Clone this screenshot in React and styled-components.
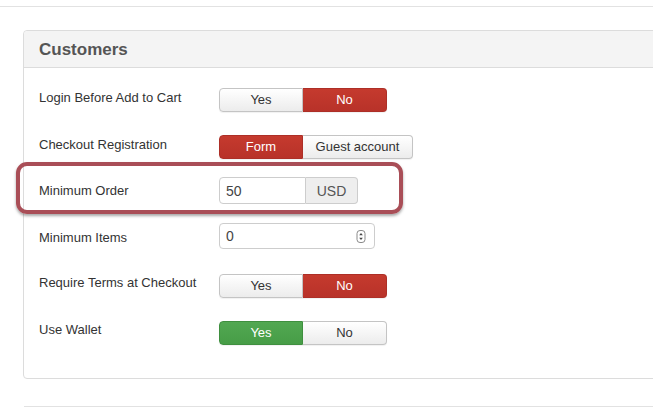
import React from "react";
import styled, { createGlobalStyle } from "styled-components";

const GlobalStyle = createGlobalStyle`
  html, body {
    margin: 0;
    padding: 0;
    background: #fff;
    overflow: hidden;
  }

  body {
    font-family: "Liberation Sans", Arial, sans-serif;
    color: #333;
  }
`;

const Page = styled.div`
  width: 653px;
  height: 408px;
  overflow: hidden;
  padding-top: 6px;
  box-sizing: border-box;
`;

const Rule = styled.hr`
  margin: ${(p) => p.$top || 0}px 0 0 ${(p) => p.$left || 0}px;
  width: 700px;
  height: 0;
  border: none;
  border-top: 1px solid #e2e2e2;
`;

const Panel = styled.section`
  margin: 23px 0 0 23px;
  width: 700px;
  border: 1px solid #dcdcdc;
  border-radius: 4px;
  background: #fff;
`;

const PanelHeader = styled.header`
  background: #f4f4f4;
  border-bottom: 1px solid #dcdcdc;
  border-radius: 4px 4px 0 0;
  padding: 9px 15px 7px;

  h2 {
    margin: 0;
    font-size: 17px;
    line-height: 20px;
    font-weight: bold;
    color: #555;
  }
`;

const PanelBody = styled.div`
  padding: 20px 15px 33px;
`;

const Row = styled.div`
  position: relative;
  display: flex;
  align-items: flex-start;
  margin-top: ${(p) => p.$space || 0}px;
`;

const Label = styled.label`
  width: 180px;
  flex: none;
  font-size: 13px;
  line-height: 18px;
  padding-top: ${(p) => p.$pad || 0}px;
  color: #333;
`;

const Toggle = styled.div`
  display: inline-flex;
  border-radius: 4px;
  box-shadow: 0 1px 1px rgba(0, 0, 0, 0.06);
`;

const tones = {
  danger: {
    bg: "linear-gradient(#c53a2e, #b83229)",
    border: "#ad2f27",
    color: "#fff",
  },
  success: {
    bg: "linear-gradient(#52a852, #479d47)",
    border: "#3f8f3f",
    color: "#fff",
  },
  plain: {
    bg: "linear-gradient(#ffffff, #ececec)",
    border: "#c4c4c4",
    color: "#333",
  },
};

const ToggleButton = styled.button`
  width: ${(p) => p.$width || 84}px;
  height: 24px;
  padding: 0;
  margin: 0;
  font-family: inherit;
  font-size: 13px;
  line-height: 22px;
  color: ${(p) => tones[p.$tone].color};
  background: ${(p) => tones[p.$tone].bg};
  border: 1px solid ${(p) => tones[p.$tone].border};
  border-left-width: 0;
  cursor: pointer;

  &:first-child {
    border-left-width: 1px;
    border-radius: 4px 0 0 4px;
  }

  &:last-child {
    border-radius: 0 4px 4px 0;
  }
`;

const InputGroup = styled.div`
  display: inline-flex;
  height: 27px;
`;

const TextInput = styled.input`
  box-sizing: border-box;
  width: ${(p) => p.$width}px;
  height: 100%;
  padding: 0 6px;
  margin: 0;
  font-family: inherit;
  font-size: 14px;
  color: #444;
  background: #fff;
  border: 1px solid #cdcdcd;
  border-radius: ${(p) => (p.$joined ? "4px 0 0 4px" : "4px")};
  outline: none;
`;

const AddOn = styled.span`
  box-sizing: border-box;
  width: 52px;
  height: 100%;
  display: flex;
  align-items: center;
  justify-content: center;
  font-size: 14px;
  color: #555;
  background: #eee;
  border: 1px solid #cdcdcd;
  border-left: none;
  border-radius: 0 4px 4px 0;
`;

const NumberField = styled.div`
  box-sizing: border-box;
  width: 156px;
  height: 26px;
  display: flex;
  align-items: center;
  padding: 0 8px 0 6px;
  border: 1px solid #cdcdcd;
  border-radius: 4px;
  background: #fff;

  input {
    flex: 1;
    min-width: 0;
    border: none;
    outline: none;
    padding: 0;
    font-family: inherit;
    font-size: 14px;
    color: #444;
    background: transparent;
  }
`;

const Highlight = styled.div`
  position: absolute;
  left: -23px;
  top: -15px;
  width: 387px;
  height: 52px;
  box-sizing: border-box;
  border: 4px solid #a94e57;
  border-radius: 11px;
  box-shadow: 0 2px 3px rgba(0, 0, 0, 0.35);
  pointer-events: none;
`;

const Spinner = () => (
  <svg width="10" height="13" viewBox="0 0 10 13">
    <rect x="1" y="0.5" width="8" height="12" rx="3" fill="#fff" stroke="#8a8a8a" />
    <path d="M3.2 5.2 L5 3 L6.8 5.2 Z" fill="#444" />
    <path d="M3.2 7.8 L5 10 L6.8 7.8 Z" fill="#444" />
  </svg>
);

const YesNo = ({ value, yesTone = "success" }) => (
  <Toggle>
    <ToggleButton $tone={value ? yesTone : "plain"}>Yes</ToggleButton>
    <ToggleButton $tone={value ? "plain" : "danger"}>No</ToggleButton>
  </Toggle>
);

export default function App() {
  return (
    <Page>
      <GlobalStyle />
      <Rule />
      <Panel>
        <PanelHeader>
          <h2>Customers</h2>
        </PanelHeader>
        <PanelBody>
          <Row>
            <Label $pad={1}>Login Before Add to Cart</Label>
            <YesNo value={false} />
          </Row>
          <Row $space={23}>
            <Label $pad={1}>Checkout Registration</Label>
            <Toggle>
              <ToggleButton $tone="danger">Form</ToggleButton>
              <ToggleButton $tone="plain" $width={110}>
                Guest account
              </ToggleButton>
            </Toggle>
          </Row>
          <Row $space={18}>
            <Highlight />
            <Label $pad={5}>Minimum Order</Label>
            <InputGroup>
              <TextInput $width={87} $joined defaultValue="50" />
              <AddOn>USD</AddOn>
            </InputGroup>
          </Row>
          <Row $space={19}>
            <Label $pad={6}>Minimum Items</Label>
            <NumberField>
              <input defaultValue="0" />
              <Spinner />
            </NumberField>
          </Row>
          <Row $space={25}>
            <Label>Require Terms at Checkout</Label>
            <YesNo value={false} />
          </Row>
          <Row $space={23}>
            <Label>Use Wallet</Label>
            <YesNo value={true} />
          </Row>
        </PanelBody>
      </Panel>
      <Rule $top={27} $left={24} />
    </Page>
  );
}
